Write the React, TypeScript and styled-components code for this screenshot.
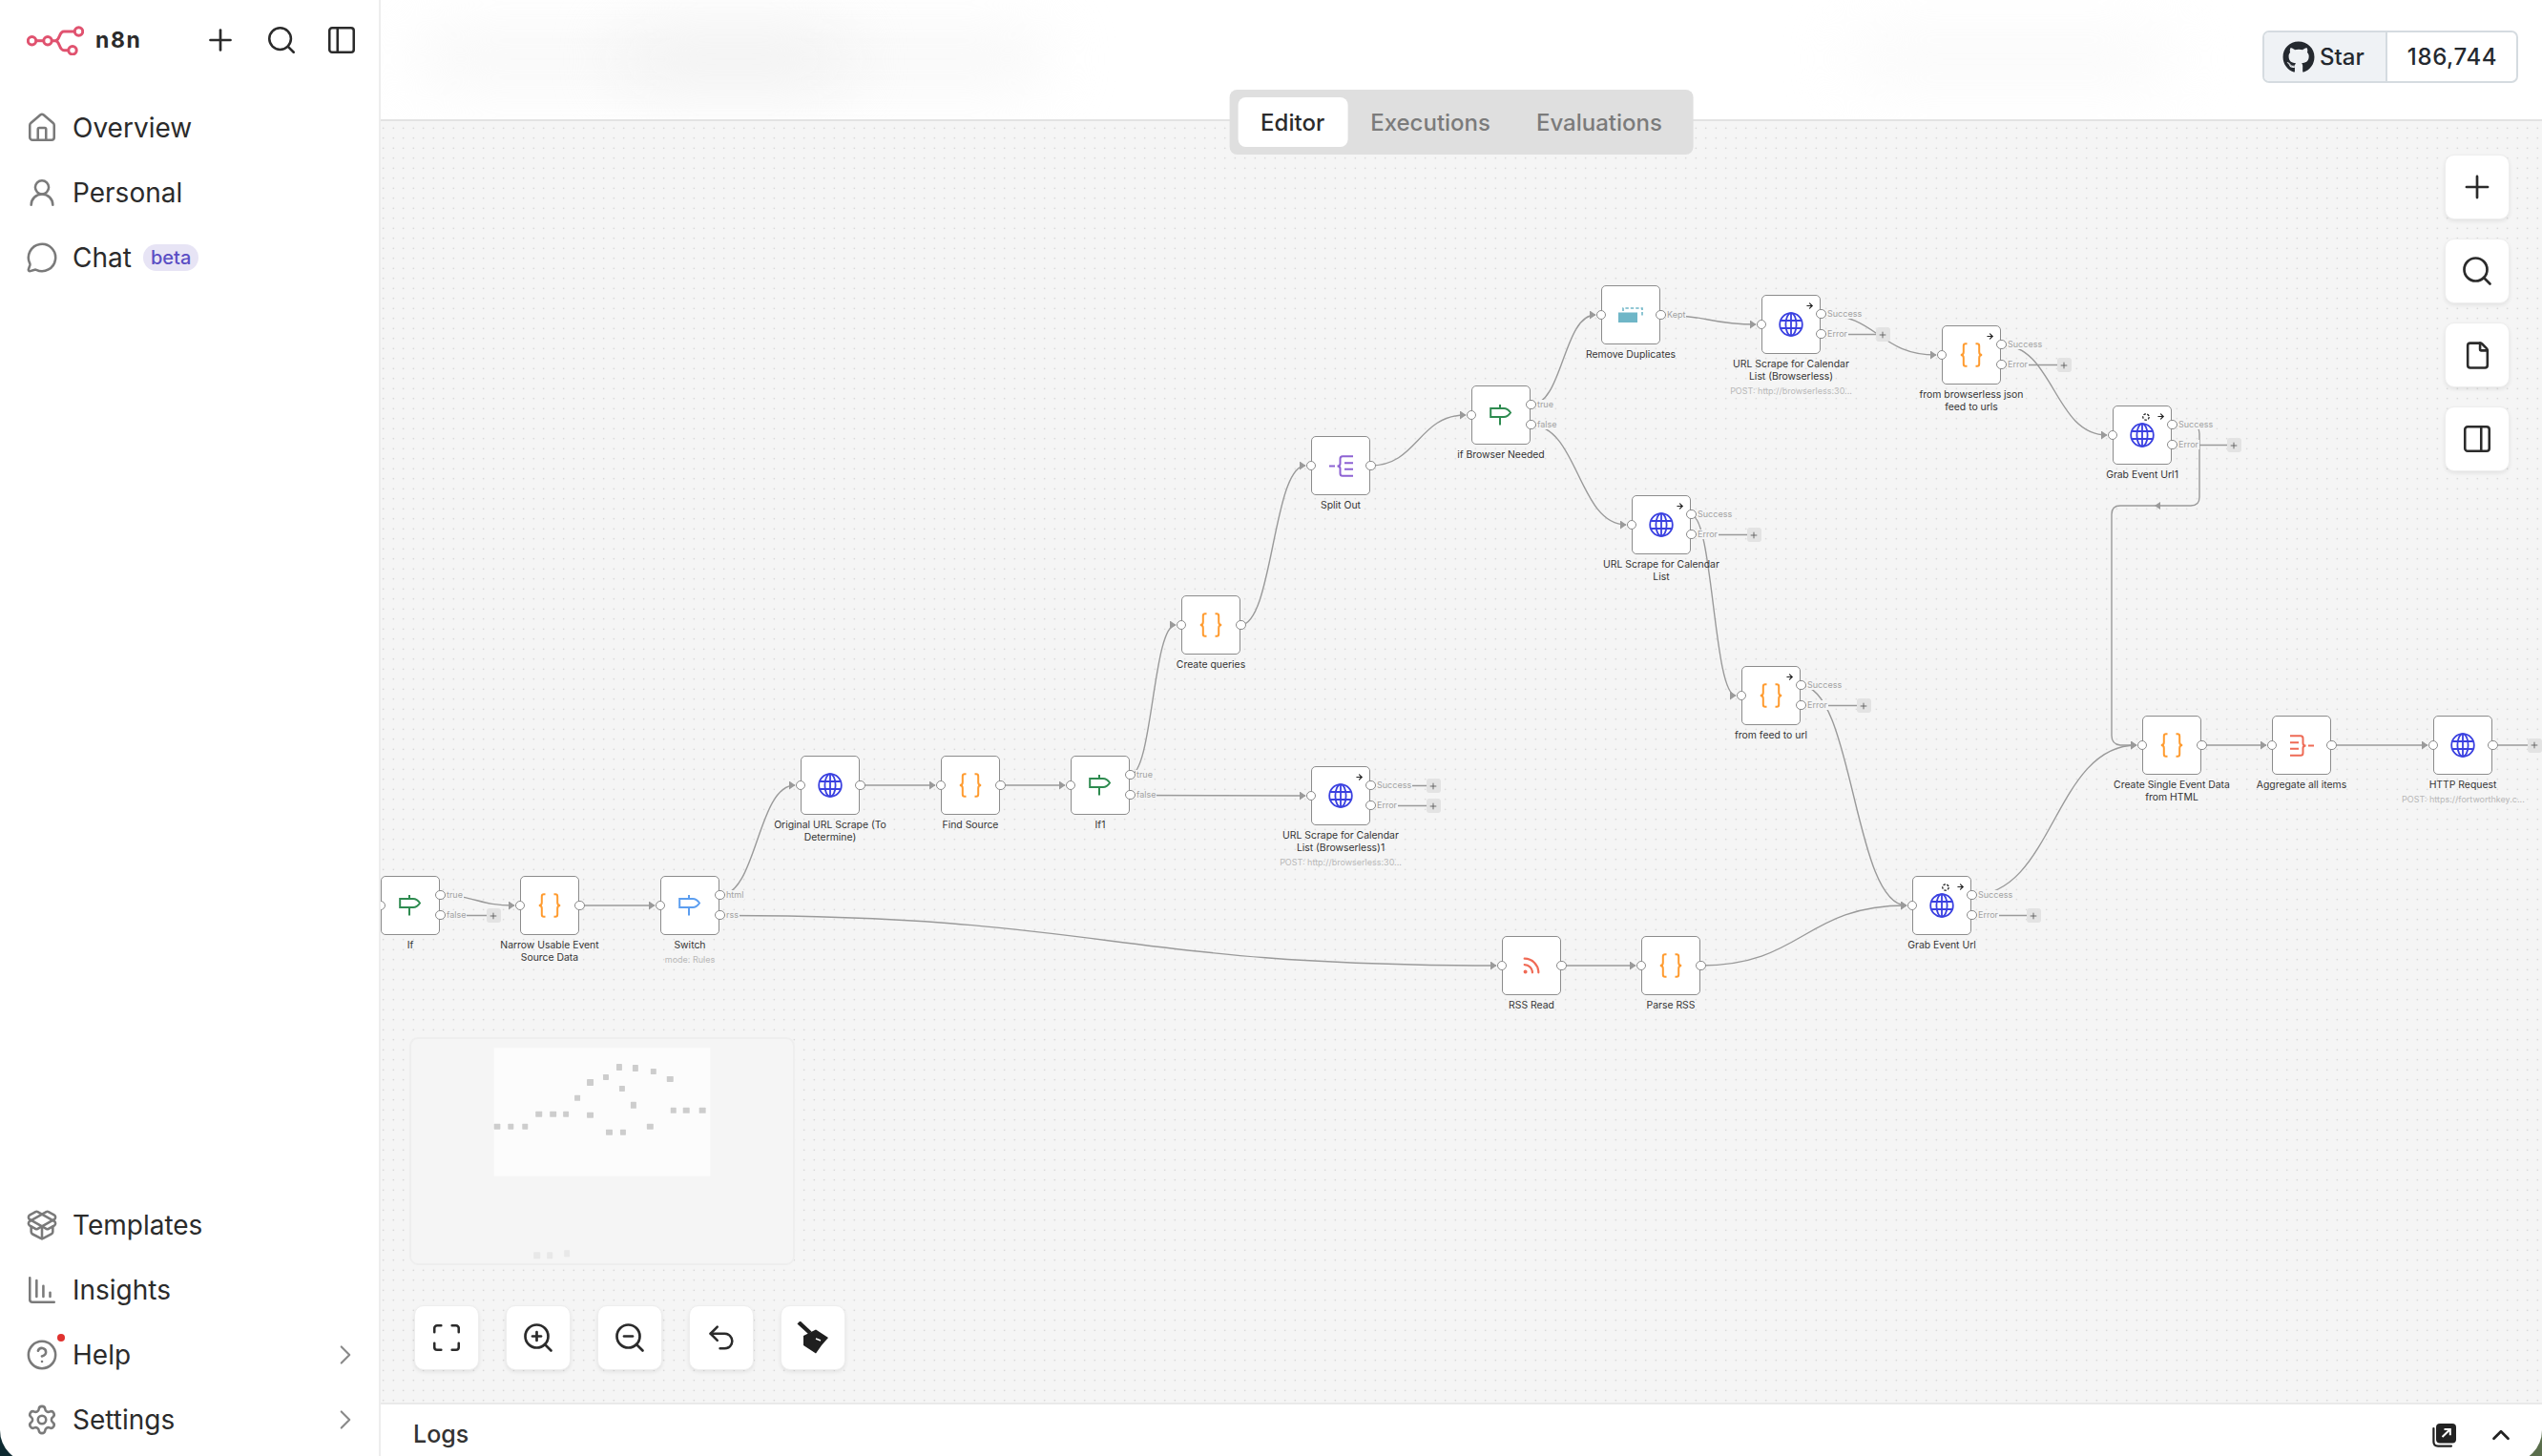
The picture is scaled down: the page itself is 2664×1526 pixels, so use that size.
import styled, { createGlobalStyle } from 'styled-components';
import {
  House,
  UserRound,
  MessageCircle,
  PackageOpen,
  ChartColumnDecreasing,
  CircleHelp,
  Settings,
  ChevronRight,
  ChevronUp,
  Plus,
  Search,
  PanelLeft,
  PanelRight,
  File,
  Maximize,
  ZoomIn,
  ZoomOut,
  Undo2,
  Rss,
  ArrowRight,
} from 'lucide-react';
import { FaGithub } from 'react-icons/fa';

// canvas starts here on the page, node positions below are page coordinates
const ORIGIN_X = 399;
const ORIGIN_Y = 127;
const NODE = 62;

type Kind = 'if' | 'switch' | 'code' | 'http' | 'split' | 'aggregate' | 'dedupe' | 'rss';

interface INode {
  id: string;
  x: number;
  y: number;
  kind: Kind;
  label: string;
  sub?: string;
  outs?: string[];
  arrow?: boolean;
  sync?: boolean;
}

const nodes: INode[] = [
  { id: 'if', x: 399, y: 918, kind: 'if', label: 'If', outs: ['true', 'false'] },
  { id: 'narrow', x: 545, y: 918, kind: 'code', label: 'Narrow Usable Event Source Data' },
  { id: 'switch', x: 692, y: 918, kind: 'switch', label: 'Switch', sub: 'mode: Rules', outs: ['html', 'rss'] },
  { id: 'original', x: 839, y: 792, kind: 'http', label: 'Original URL Scrape (To Determine)' },
  { id: 'find', x: 986, y: 792, kind: 'code', label: 'Find Source' },
  { id: 'if1', x: 1122, y: 792, kind: 'if', label: 'If1', outs: ['true', 'false'] },
  {
    id: 'scrape1',
    x: 1374,
    y: 803,
    kind: 'http',
    label: 'URL Scrape for Calendar List (Browserless)1',
    sub: 'POST: http://browserless:30...',
    outs: ['Success', 'Error'],
    arrow: true,
  },
  { id: 'queries', x: 1238, y: 624, kind: 'code', label: 'Create queries' },
  { id: 'splitOut', x: 1374, y: 457, kind: 'split', label: 'Split Out' },
  { id: 'browser', x: 1542, y: 404, kind: 'if', label: 'if Browser Needed', outs: ['true', 'false'] },
  { id: 'dedupe', x: 1678, y: 299, kind: 'dedupe', label: 'Remove Duplicates', outs: ['Kept'] },
  {
    id: 'scrapeB',
    x: 1846,
    y: 309,
    kind: 'http',
    label: 'URL Scrape for Calendar List (Browserless)',
    sub: 'POST: http://browserless:30...',
    outs: ['Success', 'Error'],
    arrow: true,
  },
  {
    id: 'scrape',
    x: 1710,
    y: 519,
    kind: 'http',
    label: 'URL Scrape for Calendar List',
    outs: ['Success', 'Error'],
    arrow: true,
  },
  {
    id: 'fromJson',
    x: 2035,
    y: 341,
    kind: 'code',
    label: 'from browserless json feed to urls',
    outs: ['Success', 'Error'],
    arrow: true,
  },
  {
    id: 'grab1',
    x: 2214,
    y: 425,
    kind: 'http',
    label: 'Grab Event Url1',
    outs: ['Success', 'Error'],
    arrow: true,
    sync: true,
  },
  {
    id: 'fromFeed',
    x: 1825,
    y: 698,
    kind: 'code',
    label: 'from feed to url',
    outs: ['Success', 'Error'],
    arrow: true,
  },
  { id: 'single', x: 2245, y: 750, kind: 'code', label: 'Create Single Event Data from HTML' },
  { id: 'aggregate', x: 2381, y: 750, kind: 'aggregate', label: 'Aggregate all items' },
  { id: 'http', x: 2550, y: 750, kind: 'http', label: 'HTTP Request', sub: 'POST: https://fortworthkey.c...' },
  {
    id: 'grab',
    x: 2004,
    y: 918,
    kind: 'http',
    label: 'Grab Event Url',
    outs: ['Success', 'Error'],
    arrow: true,
    sync: true,
  },
  { id: 'rss', x: 1574, y: 981, kind: 'rss', label: 'RSS Read' },
  { id: 'parse', x: 1720, y: 981, kind: 'code', label: 'Parse RSS' },
];

const edges: [string, number, string][] = [
  ['if', 0, 'narrow'],
  ['narrow', 0, 'switch'],
  ['switch', 0, 'original'],
  ['switch', 1, 'rss'],
  ['original', 0, 'find'],
  ['find', 0, 'if1'],
  ['if1', 0, 'queries'],
  ['if1', 1, 'scrape1'],
  ['queries', 0, 'splitOut'],
  ['splitOut', 0, 'browser'],
  ['browser', 0, 'dedupe'],
  ['browser', 1, 'scrape'],
  ['dedupe', 0, 'scrapeB'],
  ['scrapeB', 0, 'fromJson'],
  ['fromJson', 0, 'grab1'],
  ['scrape', 0, 'fromFeed'],
  ['fromFeed', 0, 'grab'],
  ['rss', 0, 'parse'],
  ['parse', 0, 'grab'],
  ['grab', 0, 'single'],
  ['single', 0, 'aggregate'],
  ['aggregate', 0, 'http'],
];

// dangling outputs that end in a + box
const stubs: [string, number, number][] = [
  ['if', 1, 56],
  ['scrape1', 0, 66],
  ['scrape1', 1, 66],
  ['scrapeB', 1, 65],
  ['scrape', 1, 66],
  ['fromJson', 1, 66],
  ['grab1', 1, 65],
  ['fromFeed', 1, 66],
  ['grab', 1, 65],
  ['http', 0, 44],
];

const byId = (id: string) => nodes.find(n => n.id === id) as INode;

const outY = (n: INode, index: number) => {
  if (!n.outs || n.outs.length < 2) return n.y + NODE / 2;
  return n.y + (index === 0 ? 20.5 : 41.5);
};

const edgePath = (from: string, index: number, to: string) => {
  const a = byId(from);
  const b = byId(to);
  const x1 = a.x + NODE;
  const y1 = outY(a, index);
  const x2 = b.x - 6;
  const y2 = b.y + NODE / 2;
  const c = (x2 - x1) / 2;
  return `M${x1} ${y1} C${x1 + c} ${y1} ${x2 - c} ${y2} ${x2} ${y2}`;
};

// minimap rectangles: x, y, w, h in the minimap's own units
const miniNodes = [
  [355, 351, 20, 18], [399, 351, 18, 18], [444, 351, 18, 18],
  [486, 312, 21, 18], [531, 312, 21, 18], [573, 312, 18, 18],
  [609, 261, 18, 18], [648, 210, 21, 21], [648, 315, 21, 18],
  [699, 195, 18, 18], [741, 162, 18, 21], [750, 231, 18, 18],
  [708, 369, 21, 18], [753, 369, 18, 18], [786, 282, 18, 21],
  [792, 165, 18, 21], [849, 177, 18, 18], [900, 201, 21, 18],
  [837, 351, 21, 18], [912, 300, 18, 18], [951, 300, 21, 18],
  [1002, 300, 21, 18],
];
const miniGhosts = [
  [480, 756, 21, 21], [522, 756, 18, 21], [576, 750, 18, 21],
];

const GlobalStyle = createGlobalStyle`
  html, body {
    margin: 0;
    padding: 0;
    height: 100%;
    overflow: hidden;
    font-family: Inter, "Noto Sans", sans-serif;
    color: #2b2b2b;
  }
`;

const Page = styled.div`
  width: 2664px;
  height: 1526px;
  overflow: hidden;
  background: linear-gradient(90deg, #0e2a31 50%, #5a6e4c 50%);
`;

const Screen = styled.div`
  width: 2664px;
  height: 1533px;
  display: flex;
  overflow: hidden;
  background: #fff;
  border-radius: 0 0 34px 34px;
`;

const Sidebar = styled.aside`
  width: 399px;
  flex: none;
  box-sizing: border-box;
  border-right: 2px solid #ededed;
  display: flex;
  flex-direction: column;
  padding-bottom: 11px;
`;

const SidebarTop = styled.div`
  height: 84px;
  margin-bottom: 16px;
  box-sizing: border-box;
  padding: 0 22px 0 28px;
  display: flex;
  align-items: center;
`;

const Wordmark = styled.span`
  margin-left: 12px;
  font-size: 23px;
  font-weight: 700;
  letter-spacing: 1.6px;
  color: #2b2b2b;
`;

const TopActions = styled.div`
  margin-left: auto;
  display: flex;
  align-items: center;
  gap: 29px;
  color: #2b2b2b;
`;

const Nav = styled.nav<{ $bottom?: boolean }>`
  display: flex;
  flex-direction: column;
  margin-top: ${p => (p.$bottom ? 'auto' : '0')};
`;

const NavItem = styled.div`
  height: 68px;
  padding: 0 18px 0 27px;
  display: flex;
  align-items: center;
  position: relative;
  font-size: 28px;
  color: #2b2b2b;
  svg.lead {
    color: #7a7a7a;
    width: 34px;
    height: 34px;
    margin-right: 15px;
    flex: none;
  }
  svg.chev {
    margin-left: auto;
    color: #8a8a8a;
  }
`;

const Beta = styled.span`
  margin-left: 12px;
  padding: 0 8px;
  height: 28px;
  line-height: 28px;
  border-radius: 14px;
  background: #e7e4f5;
  color: #5a4ec4;
  font-size: 20px;
  font-weight: 500;
`;

const Dot = styled.span`
  position: absolute;
  left: 60px;
  top: 12px;
  width: 8px;
  height: 8px;
  border-radius: 50%;
  background: #e0322f;
`;

const Main = styled.main`
  flex: 1;
  min-width: 0;
  display: flex;
  flex-direction: column;
  position: relative;
`;

const Header = styled.header`
  height: 127px;
  flex: none;
  box-sizing: border-box;
  border-bottom: 2px solid #e3e3e3;
  display: flex;
  justify-content: flex-end;
  align-items: flex-start;
  padding: 32px 25px 0 0;
  position: relative;
  overflow: hidden;
`;

const Smudge = styled.div<{ $left: number; $width: number; $color: string }>`
  position: absolute;
  top: 34px;
  left: ${p => p.$left}px;
  width: ${p => p.$width}px;
  height: 56px;
  background: ${p => p.$color};
  border-radius: 28px;
  filter: blur(32px);
`;

const Star = styled.div`
  height: 55px;
  display: flex;
  box-sizing: border-box;
  border: 2px solid #d5dbe0;
  border-radius: 7px;
  overflow: hidden;
  font-size: 24px;
  font-weight: 500;
  color: #24292f;
  position: relative;
`;

const StarLabel = styled.div`
  width: 129px;
  box-sizing: border-box;
  padding-left: 19px;
  display: flex;
  align-items: center;
  gap: 5px;
  background: #eff2f5;
  border-right: 2px solid #d5dbe0;
`;

const StarCount = styled.div`
  width: 134px;
  padding-left: 1px;
  display: flex;
  align-items: center;
  justify-content: center;
  letter-spacing: 0.6px;
`;

const Tabs = styled.div`
  position: absolute;
  z-index: 5;
  top: 94px;
  left: 50%;
  transform: translateX(-50%);
  height: 68px;
  box-sizing: border-box;
  padding: 8px 9px;
  display: flex;
  background: #dfdfdf;
  border-radius: 8px;
`;

const Tab = styled.div<{ $active?: boolean }>`
  height: 52px;
  padding: 0 24px;
  display: flex;
  align-items: center;
  border-radius: 8px;
  font-size: 24px;
  font-weight: 500;
  background: ${p => (p.$active ? '#fff' : 'transparent')};
  color: ${p => (p.$active ? '#2b2b2b' : '#7b7b7b')};
`;

const Canvas = styled.div`
  flex: 1;
  min-height: 0;
  position: relative;
  overflow: hidden;
  background-color: #f5f5f5;
  background-image: radial-gradient(circle at center, #c6c6c6 0.55px, transparent 1px);
  background-size: 10.5px 10.5px;
  background-position: -2.5px 2px;
`;

const Edges = styled.svg`
  position: absolute;
  inset: 0;
  width: 100%;
  height: 100%;
`;

const NodeBox = styled.div<{ $x: number; $y: number }>`
  position: absolute;
  left: ${p => p.$x - ORIGIN_X}px;
  top: ${p => p.$y - ORIGIN_Y}px;
  width: ${NODE}px;
  height: ${NODE}px;
  box-sizing: border-box;
  background: #fff;
  border: 1.4px solid #8c8c8c;
  border-radius: 5px;
  display: flex;
  align-items: center;
  justify-content: center;
`;

const Port = styled.span<{ $side: 'in' | 'out'; $top: number }>`
  position: absolute;
  ${p => (p.$side === 'in' ? 'left: -6.4px;' : 'right: -6.8px;')}
  top: ${p => p.$top - 6.4}px;
  width: 10.4px;
  height: 10.4px;
  box-sizing: border-box;
  background: #fff;
  border: 1px solid #8a8a8a;
  border-radius: 50%;
`;

const PortLabel = styled.span<{ $top: number }>`
  position: absolute;
  left: calc(100% + 7px);
  top: ${p => p.$top - 6.4}px;
  height: 10px;
  padding: 0 1px;
  line-height: 10px;
  font-size: 9px;
  color: #a2a2a2;
  background: #f5f5f5;
  white-space: nowrap;
`;

const NodeText = styled.div`
  position: absolute;
  top: calc(100% + 5px);
  left: 50%;
  width: 128px;
  margin-left: -64px;
  text-align: center;
  font-size: 10.4px;
  line-height: 13px;
  color: #333;
`;

const NodeSub = styled.div`
  margin-top: 2px;
  font-size: 9px;
  line-height: 13px;
  color: #b8b8b8;
  white-space: nowrap;
`;

const Badges = styled.div`
  position: absolute;
  top: 6px;
  right: 6px;
  display: flex;
  align-items: center;
  gap: 7px;
  color: #222;
`;

const AddBox = styled.div<{ $x: number; $y: number }>`
  position: absolute;
  left: ${p => p.$x - ORIGIN_X - 7.5}px;
  top: ${p => p.$y - ORIGIN_Y - 7.5}px;
  width: 15px;
  height: 15px;
  border-radius: 3px;
  background: #e3e3e3;
  color: #555;
  display: flex;
  align-items: center;
  justify-content: center;
`;

const Minimap = styled.div`
  position: absolute;
  left: 30px;
  top: 960px;
  width: 404px;
  height: 239px;
  box-sizing: border-box;
  background: #f5f5f5;
  border: 2px solid #eeeeee;
  border-radius: 9px;
  svg {
    display: block;
    width: 100%;
    height: 100%;
  }
`;

const ToolButton = styled.button`
  width: 68px;
  height: 68px;
  padding: 0;
  box-sizing: border-box;
  display: flex;
  align-items: center;
  justify-content: center;
  background: #fff;
  border: 1px solid #eeeeee;
  border-radius: 10px;
  box-shadow: 0 2px 4px rgba(0, 0, 0, 0.08);
  color: #2b2b2b;
`;

const ZoomBar = styled.div`
  position: absolute;
  left: 35px;
  bottom: 34px;
  display: flex;
  gap: 28px;
`;

const RightBar = styled.div`
  position: absolute;
  right: 34px;
  top: 35px;
  display: flex;
  flex-direction: column;
  gap: 20px;
`;

const LogsBar = styled.footer`
  height: 63px;
  flex: none;
  box-sizing: border-box;
  border-top: 2px solid #e9e9e9;
  padding: 0 28px 0 34px;
  display: flex;
  align-items: center;
  font-size: 25px;
  font-weight: 500;
  color: #333;
`;

const LogsActions = styled.div`
  margin-left: auto;
  margin-top: 3px;
  display: flex;
  align-items: center;
  gap: 32px;
  color: #222;
`;

function Logo() {
  return (
    <svg width="60" height="31" viewBox="0 0 60 31" fill="none" stroke="#e0526f" strokeWidth="3">
      <circle cx="5.5" cy="15.7" r="4.2" />
      <circle cx="22" cy="15.7" r="4.2" />
      <circle cx="54.5" cy="6" r="4.2" />
      <circle cx="48" cy="25.7" r="4.2" />
      <path d="M9.7 15.7H17.8" />
      <path d="M26.2 15.7H30C35 15.7 33.5 6 39 6H50.3" />
      <path d="M30 15.7C35 15.7 33.5 25.7 39 25.7H43.8" />
    </svg>
  );
}

function GlobeIcon() {
  return (
    <svg width="26" height="26" viewBox="0 0 26 26" fill="none" stroke="#3a40e0" strokeWidth="1.8">
      <circle cx="13" cy="13" r="11.8" />
      <ellipse cx="13" cy="13" rx="5.6" ry="11.8" />
      <path d="M13 1.2V24.8M2.2 9H23.8M2.2 17H23.8" />
    </svg>
  );
}

function BracesIcon() {
  return (
    <svg width="24" height="26" viewBox="0 0 24 26" fill="none" stroke="#ff9b2f" strokeWidth="2">
      <path d="M7.5 1.2H6Q3.8 1.2 3.8 3.4V10Q3.8 13 .8 13Q3.8 13 3.8 16V22.6Q3.8 24.8 6 24.8H7.5" />
      <path d="M16.5 1.2H18Q20.2 1.2 20.2 3.4V10Q20.2 13 23.2 13Q20.2 13 20.2 16V22.6Q20.2 24.8 18 24.8H16.5" />
    </svg>
  );
}

function SignIcon({ color }: { color: string }) {
  return (
    <svg width="24" height="22" viewBox="0 0 24 22" fill="none" stroke={color} strokeWidth="2">
      <path d="M1.2 4H15Q19 4 22 8.5Q19 13 15 13H1.2Z" />
      <path d="M11 0V4M11 13V21.5" />
    </svg>
  );
}

function SplitIcon({ color, flip }: { color: string; flip?: boolean }) {
  return (
    <svg
      width="25"
      height="23"
      viewBox="0 0 25 23"
      fill="none"
      stroke={color}
      strokeWidth="2"
      transform={flip ? 'scale(-1 1)' : undefined}
    >
      <path d="M0 11.5H6" />
      <path d="M17 1.2H14Q11.5 1.2 11.5 3.7V9Q11.5 11.5 8.5 11.5Q11.5 11.5 11.5 14V19.3Q11.5 21.8 14 21.8H17" />
      <path d="M17 1.2H25M16 8.2H25M16 14.8H25M17 21.8H25" />
    </svg>
  );
}

function DedupeIcon() {
  return (
    <svg width="26" height="16" viewBox="0 0 26 16" fill="none">
      <rect x="0" y="5.5" width="20" height="10.5" fill="#6fb6c7" />
      <path d="M5 4V1H25V9" stroke="#6fb6c7" strokeWidth="1.6" strokeDasharray="3.4 2" />
    </svg>
  );
}

function SyncDash() {
  return (
    <svg width="8" height="8" viewBox="0 0 8 8" fill="none" stroke="#222" strokeWidth="1.3">
      <circle cx="4" cy="4" r="3.2" strokeDasharray="2.6 1.4" />
    </svg>
  );
}

function PopOut() {
  return (
    <svg width="25" height="25" viewBox="0 0 25 25" fill="none">
      <rect x="4" y="0" width="21" height="20.5" rx="4" fill="#222" />
      <path d="M1.4 5V19Q1.4 23.6 6 23.6H20" stroke="#222" strokeWidth="2.2" strokeLinecap="round" />
      <path d="M10.5 14L18.5 6.2M12.5 6H18.8V12.2" stroke="#fff" strokeWidth="2" />
    </svg>
  );
}

function BroomIcon() {
  return (
    <svg width="34" height="34" viewBox="0 0 34 34" fill="none">
      <path d="M2 1L14 12" stroke="#1f1f1f" strokeWidth="4.4" />
      <path d="M7 15L20 8.5L33 17L26 25L20 33.5L7 25Z" fill="#1f1f1f" />
      <path d="M20 18L25 20" stroke="#fff" strokeWidth="1.4" />
    </svg>
  );
}

function NodeIcon({ kind }: { kind: Kind }) {
  switch (kind) {
    case 'if':
      return <SignIcon color="#2e8b50" />;
    case 'switch':
      return <SignIcon color="#5c9ef0" />;
    case 'code':
      return <BracesIcon />;
    case 'http':
      return <GlobeIcon />;
    case 'split':
      return <SplitIcon color="#8d62d3" />;
    case 'aggregate':
      return <SplitIcon color="#ee6a55" flip />;
    case 'dedupe':
      return <DedupeIcon />;
    default:
      return <Rss size={22} color="#f06a55" strokeWidth={2.4} />;
  }
}

function WorkflowNode({ node }: { node: INode }) {
  const outs = node.outs && node.outs.length ? node.outs : [''];
  return (
    <NodeBox $x={node.x} $y={node.y}>
      <NodeIcon kind={node.kind} />
      {(node.arrow || node.sync) && (
        <Badges>
          {node.sync && <SyncDash />}
          {node.arrow && <ArrowRight size={9} strokeWidth={3} />}
        </Badges>
      )}
      <Port $side="in" $top={NODE / 2} />
      {outs.map((label, i) => {
        const top = outY(node, i) - node.y;
        return (
          <span key={i}>
            <Port $side="out" $top={top} />
            {label && <PortLabel $top={top}>{label}</PortLabel>}
          </span>
        );
      })}
      <NodeText>
        {node.label}
        {node.sub && <NodeSub>{node.sub}</NodeSub>}
      </NodeText>
    </NodeBox>
  );
}

export default function App() {
  return (
    <>
      <GlobalStyle />
      <Page>
        <Screen>
          <Sidebar>
            <SidebarTop>
              <Logo />
              <Wordmark>n8n</Wordmark>
              <TopActions>
                <Plus size={36} strokeWidth={1.8} />
                <Search size={34} strokeWidth={1.8} />
                <PanelLeft size={34} strokeWidth={1.8} />
              </TopActions>
            </SidebarTop>
            <Nav>
              <NavItem>
                <House className="lead" strokeWidth={1.8} />
                Overview
              </NavItem>
              <NavItem>
                <UserRound className="lead" strokeWidth={1.8} />
                Personal
              </NavItem>
              <NavItem>
                <MessageCircle className="lead" strokeWidth={1.8} />
                Chat
                <Beta>beta</Beta>
              </NavItem>
            </Nav>
            <Nav $bottom>
              <NavItem>
                <PackageOpen className="lead" strokeWidth={1.8} />
                Templates
              </NavItem>
              <NavItem>
                <ChartColumnDecreasing className="lead" strokeWidth={1.8} />
                Insights
              </NavItem>
              <NavItem>
                <CircleHelp className="lead" strokeWidth={1.8} />
                <Dot />
                Help
                <ChevronRight className="chev" size={34} strokeWidth={1.5} />
              </NavItem>
              <NavItem>
                <Settings className="lead" strokeWidth={1.8} />
                Settings
                <ChevronRight className="chev" size={34} strokeWidth={1.5} />
              </NavItem>
            </Nav>
          </Sidebar>
          <Main>
            <Header>
              <Smudge $left={40} $width={660} $color="#f7f7f7" />
              <Smudge $left={250} $width={240} $color="#f2f2f2" />
              <Smudge $left={1540} $width={340} $color="#fafafa" />
              <Star>
                <StarLabel>
                  <FaGithub size={34} />
                  Star
                </StarLabel>
                <StarCount>186,744</StarCount>
              </Star>
            </Header>
            <Tabs>
              <Tab $active>Editor</Tab>
              <Tab>Executions</Tab>
              <Tab>Evaluations</Tab>
            </Tabs>
            <Canvas>
              <Edges viewBox={`${ORIGIN_X} ${ORIGIN_Y} 2265 1343`} preserveAspectRatio="xMinYMin slice">
                <defs>
                  <marker id="tip" markerUnits="userSpaceOnUse" markerWidth="7" markerHeight="9" refX="6" refY="4.5" orient="auto">
                    <path d="M0 0L6.5 4.5L0 9Z" fill="#9a9a9a" />
                  </marker>
                </defs>
                <g fill="none" stroke="#9a9a9a" strokeWidth="1.4">
                  {edges.map(([from, i, to]) => (
                    <path key={`${from}${i}${to}`} d={edgePath(from, i, to)} markerEnd="url(#tip)" />
                  ))}
                  {stubs.map(([from, i, offset]) => {
                    const a = byId(from);
                    const y = outY(a, i);
                    return <path key={`${from}${i}`} d={`M${a.x + NODE} ${y}H${a.x + NODE + offset}`} />;
                  })}
                  <path d="M2276 445.5H2296Q2305 445.5 2305 454.5V521Q2305 530 2296 530H2222Q2213 530 2213 539V771Q2213 780 2222 781H2239" markerEnd="url(#tip)" />
                </g>
                <path d="M2258 530L2264 526V534Z" fill="#9a9a9a" />
              </Edges>
              {nodes.map(n => (
                <WorkflowNode key={n.id} node={n} />
              ))}
              {stubs.map(([from, i, offset]) => {
                const a = byId(from);
                return (
                  <AddBox key={`${from}${i}`} $x={a.x + NODE + offset} $y={outY(a, i)}>
                    <Plus size={10} strokeWidth={2} />
                  </AddBox>
                );
              })}
              <Minimap>
                <svg viewBox="94 84 1204 707">
                  <rect x="355" y="112" width="682" height="404" fill="#fcfcfc" />
                  {miniNodes.map(([x, y, w, h]) => (
                    <rect key={`${x}${y}`} x={x} y={y} width={w} height={h} rx="2" fill="#cdcdcd" />
                  ))}
                  {miniGhosts.map(([x, y, w, h]) => (
                    <rect key={`${x}${y}`} x={x} y={y} width={w} height={h} rx="2" fill="#e8e8e8" />
                  ))}
                </svg>
              </Minimap>
              <ZoomBar>
                <ToolButton><Maximize size={34} strokeWidth={1.8} /></ToolButton>
                <ToolButton><ZoomIn size={36} strokeWidth={1.8} /></ToolButton>
                <ToolButton><ZoomOut size={36} strokeWidth={1.8} /></ToolButton>
                <ToolButton><Undo2 size={34} strokeWidth={1.8} /></ToolButton>
                <ToolButton><BroomIcon /></ToolButton>
              </ZoomBar>
              <RightBar>
                <ToolButton><Plus size={38} strokeWidth={1.7} /></ToolButton>
                <ToolButton><Search size={36} strokeWidth={1.8} /></ToolButton>
                <ToolButton><File size={31} strokeWidth={2} /></ToolButton>
                <ToolButton><PanelRight size={34} strokeWidth={1.8} /></ToolButton>
              </RightBar>
            </Canvas>
            <LogsBar>
              Logs
              <LogsActions>
                <PopOut />
                <ChevronUp size={30} strokeWidth={2.2} />
              </LogsActions>
            </LogsBar>
          </Main>
        </Screen>
      </Page>
    </>
  );
}
